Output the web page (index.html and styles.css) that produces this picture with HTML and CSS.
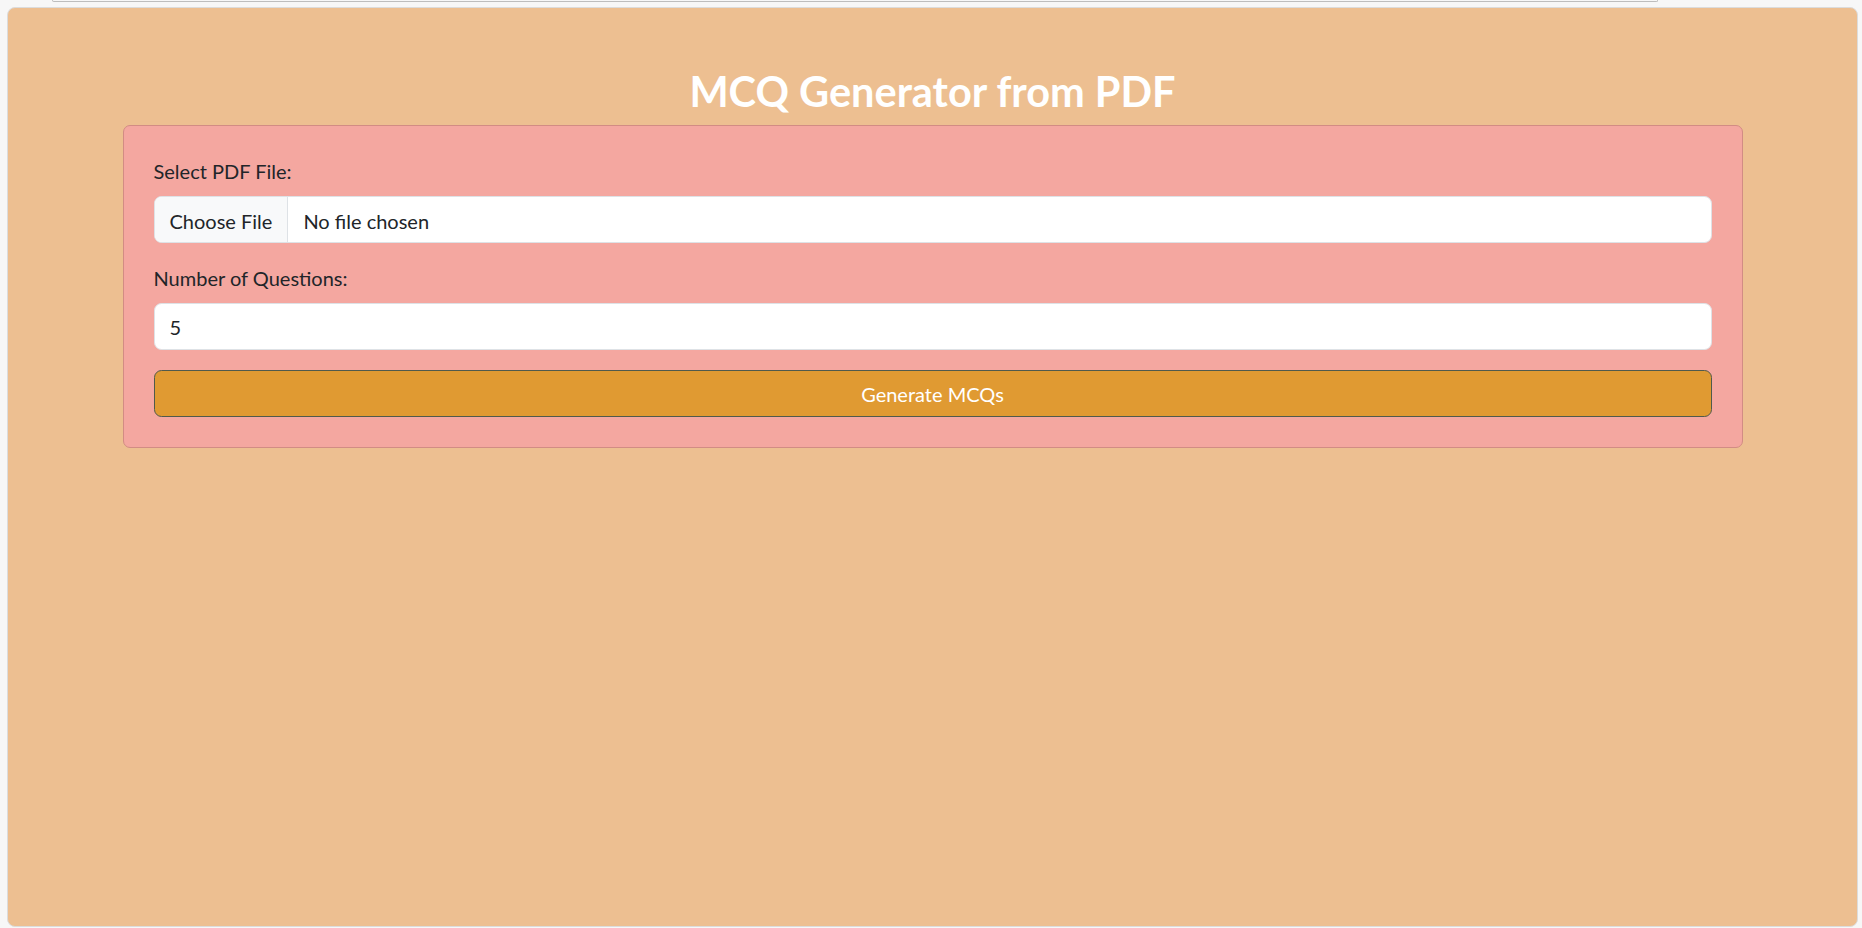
FILE: index.html
```html
<!DOCTYPE html>
<html lang="en">
<head>
<meta charset="utf-8">
<title>MCQ Generator from PDF</title>
<link rel="stylesheet" href="styles.css">
</head>
<body>
<div class="page">
  <div class="stub"></div>
  <main class="shell">
    <div class="container">
      <h2 class="title">MCQ Generator from PDF</h2>
      <form class="panel">
        <div class="field">
          <label class="label" for="pdf">Select PDF File:</label>
          <input class="control file" id="pdf" type="file" accept="application/pdf">
        </div>
        <div class="field">
          <label class="label" for="num">Number of Questions:</label>
          <input class="control" id="num" type="number" value="5" min="1">
        </div>
        <button class="btn" type="button">Generate MCQs</button>
      </form>
    </div>
  </main>
</div>
</body>
</html>
```
FILE: styles.css
```css
* { box-sizing: border-box; }
html, body { margin: 0; padding: 0; }
body {
  background: #f7f7f7;
  font-family: Lato, "Liberation Sans", sans-serif;
  font-size: 20px;
  line-height: 1.5;
  color: #212529;
}
.page {
  display: flex;
  flex-direction: column;
  height: 928px;
}
.stub {
  margin: 0 204px 0 52px;
  height: 2px;
  border: 1px solid #bdbdbd;
  border-top: 0;
  border-radius: 0 0 8px 8px;
}
.shell {
  flex: 1;
  margin: 5px 4px 1px 7px;
  background: #edbf91;
  border: 1px solid #dcdcdc;
  border-radius: 8px;
}
.container {
  max-width: 1650px;
  margin: 0 auto;
  padding: 59px 15px 0;
}
.title {
  margin: 0 0 10px;
  font-size: 41.5px;
  line-height: 48px;
  font-weight: 700;
  color: #fff;
  text-align: center;
}
.panel {
  background: #f4a7a0;
  border: 1.25px solid #d28c84;
  border-radius: 7px;
  padding: 30px;
}
.field { margin-bottom: 20px; }
.label {
  display: block;
  margin-bottom: 10px;
}
.control {
  display: block;
  width: 100%;
  height: 47px;
  padding: 7px 15px;
  font: inherit;
  color: #212529;
  background: #fff;
  border: 1.25px solid #dee2e6;
  border-radius: 7.5px;
  outline: none;
}
.file { overflow: hidden; }
.file::file-selector-button {
  height: 47px;
  margin: -7px 15px -7px -15px;
  padding: 7px 15px;
  font: inherit;
  color: #212529;
  background: #f8f9fa;
  border: 0;
  border-right: 1.25px solid #dee2e6;
  border-radius: 0;
}
.btn {
  display: block;
  width: 100%;
  height: 47px;
  padding: 7px 15px;
  font: inherit;
  color: #fff;
  background: #e09a32;
  border: 1.25px solid #505a4c;
  border-radius: 7.5px;
  cursor: pointer;
}
```
